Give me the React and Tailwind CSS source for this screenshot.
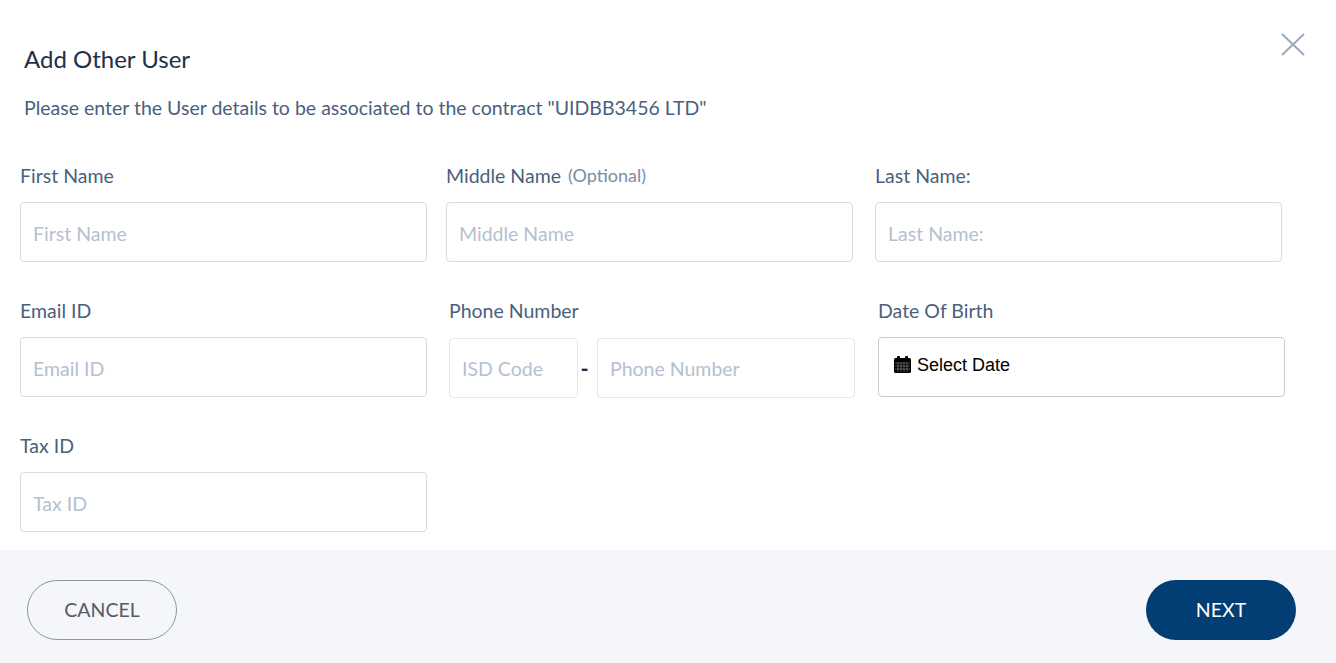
import React from "react";

function Field({ label, optional, className = "" }) {
  return (
    <div className={`flex w-[407px] flex-col ${className}`}>
      <div className="flex h-[26px] items-center gap-[7px] text-[19.5px] text-[#4a5f7d]">
        <span>{label}</span>
        {optional && <span className="-mt-[2px] text-[18px] text-[#7c8ba1]">{optional}</span>}
      </div>
      <input
        placeholder={label}
        className="mt-[13px] h-[60px] w-full rounded-[4px] border border-[#d8dbe3] bg-white px-3 pt-[2px] text-[19.5px] outline-none placeholder:text-[#b5c0d0]"
      />
    </div>
  );
}

function CalendarIcon() {
  return (
    <svg width="17" height="17" viewBox="0 0 17 17" className="mt-[3px] shrink-0">
      <rect x="0" y="2" width="17" height="15" rx="1.5" fill="#000" />
      <rect x="3" y="0" width="3" height="4" rx="1" fill="#000" />
      <rect x="11" y="0" width="3" height="4" rx="1" fill="#000" />
      <path d="M1 7H16M1 10H16M1 13H16M4 6.5V16M7 6.5V16M10 6.5V16M13 6.5V16" stroke="#fff" strokeOpacity="0.55" strokeWidth="0.6" fill="none" />
    </svg>
  );
}

export default function App() {
  return (
    <div className="flex h-[663px] w-[1336px] flex-col overflow-hidden bg-white font-['Lato',sans-serif]">
      <div className="relative flex-1 pl-5 pt-[43px]">
        <button aria-label="Close" className="absolute left-[1281px] top-[33px] text-[#9aa9bc]">
          <svg width="24" height="23" viewBox="0 0 24 23" fill="none" stroke="currentColor" strokeWidth="2">
            <path d="M1 1L23 22M23 1L1 22" />
          </svg>
        </button>
        <h1 className="ml-1 text-[24px] leading-[32px] font-normal text-[#1f2f4a]">Add Other User</h1>
        <p className="ml-1 mt-[21px] text-[19.5px] leading-[24px] text-[#4a5f7d]">
          Please enter the User details to be associated to the contract "UIDBB3456 LTD"
        </p>
        <div className="mt-[43px] flex">
          <Field label="First Name" />
          <Field label="Middle Name" optional="(Optional)" className="ml-[19px]" />
          <Field label="Last Name:" className="ml-[22px]" />
        </div>
        <div className="mt-[36px] flex">
          <Field label="Email ID" />
          <div className="ml-[22px] flex w-[406px] flex-col">
            <div className="flex h-[26px] items-center text-[19.5px] text-[#4a5f7d]">Phone Number</div>
            <div className="mt-[14px] flex items-center">
              <input
                placeholder="ISD Code"
                className="h-[60px] w-[129px] rounded-[4px] border border-[#e3e6ee] bg-white px-3 text-[19.5px] outline-none placeholder:text-[#b5c0d0]"
              />
              <span className="w-[19px] pr-[6px] text-center text-[22px] font-bold text-[#1f2f4a]">-</span>
              <input
                placeholder="Phone Number"
                className="h-[60px] w-[258px] rounded-[4px] border border-[#e3e6ee] bg-white px-3 text-[19.5px] outline-none placeholder:text-[#b5c0d0]"
              />
            </div>
          </div>
          <div className="ml-[23px] flex w-[407px] flex-col">
            <div className="flex h-[26px] items-center text-[19.5px] text-[#4a5f7d]">Date Of Birth</div>
            <div className="mt-[13px] flex h-[60px] items-start gap-[6px] rounded-[4px] border border-[#cccccc] bg-white pl-[15px] pt-[15px] font-['Liberation_Sans',sans-serif] text-[18px] leading-[24px] text-black">
              <CalendarIcon />
              <span>Select Date</span>
            </div>
          </div>
        </div>
        <div className="mt-[35px] flex">
          <Field label="Tax ID" />
        </div>
      </div>
      <div className="flex h-[113px] items-center bg-[#f4f6fa]">
        <div className="ml-[27px] flex h-full w-[1283px] items-center justify-between bg-[#f5f6fa] pr-[14px] pt-[7px]">
          <button className="h-[60px] w-[150px] rounded-full border border-[#8a94a6] text-[19.5px] text-[#545b68]">CANCEL</button>
          <button className="h-[60px] w-[150px] rounded-full bg-[#023e73] text-[19.5px] text-white">NEXT</button>
        </div>
      </div>
    </div>
  );
}
